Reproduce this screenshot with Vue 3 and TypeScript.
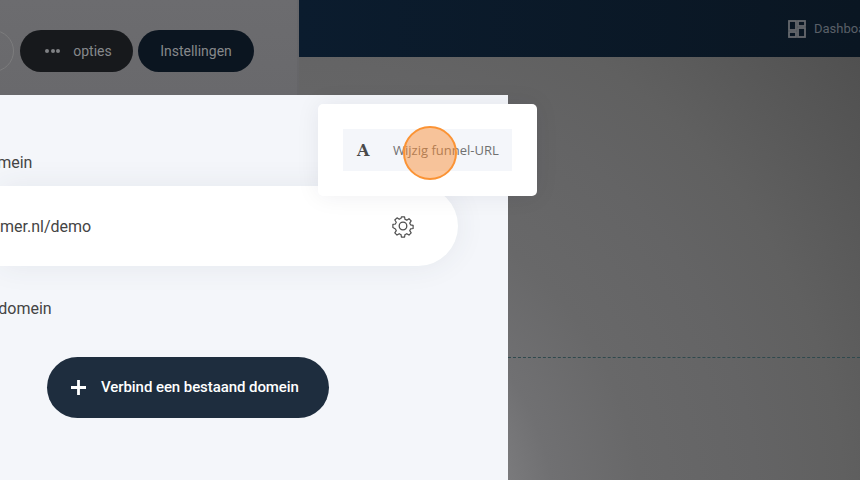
<template>
  <div class="page">
    <header class="topbar">
      <div class="toolbar">
        <span class="round-btn"></span>
        <button class="pill pill-options">
          <span class="dots"><i></i><i></i><i></i></span>
          opties
        </button>
        <button class="pill pill-settings">Instellingen</button>
      </div>
      <nav class="nav">
        <a class="nav-link">
          <svg class="nav-icon" viewBox="0 0 18 18" fill="none" stroke="currentColor" stroke-width="1.8">
            <rect x="1" y="1" width="7" height="9" />
            <rect x="10" y="1" width="7" height="5" />
            <rect x="1" y="12" width="7" height="5" />
            <rect x="10" y="8" width="7" height="9" />
          </svg>
          Dashboard
        </a>
      </nav>
    </header>

    <main class="stage">
      <section class="panel">
        <h3 class="label label-first">Hoofddomein</h3>
        <div class="domain-row">
          <span class="domain-url">klantenklimmer.nl/demo</span>
          <svg class="gear" viewBox="0 0 24 24" fill="none" stroke="currentColor" stroke-width="1.3" stroke-linejoin="round">
            <path d="M10.3 2h3.4l.5 2.8c.7.2 1.3.5 1.9.9l2.4-1.6 2.4 2.4-1.6 2.4c.4.6.7 1.2.9 1.9l2.8.5v3.4l-2.8.5c-.2.7-.5 1.3-.9 1.9l1.6 2.4-2.4 2.4-2.4-1.6c-.6.4-1.2.7-1.9.9l-.5 2.8h-3.4l-.5-2.8c-.7-.2-1.3-.5-1.9-.9l-2.4 1.6-2.4-2.4 1.6-2.4c-.4-.6-.7-1.2-.9-1.9L1 13.7v-3.4l2.8-.5c.2-.7.5-1.3.9-1.9L3.1 5.5l2.4-2.4 2.4 1.6c.6-.4 1.2-.7 1.9-.9z" transform="translate(12 12) scale(.92) translate(-12 -12)" />
            <circle cx="12" cy="12" r="3.8" />
          </svg>
        </div>
        <h3 class="label label-second">Subdomein</h3>
        <button class="connect-btn">
          <svg class="plus" viewBox="0 0 16 16" fill="none" stroke="currentColor" stroke-width="3">
            <path d="M8 0v16M0 8h16" />
          </svg>
          <span class="connect-text">Verbind een bestaand domein</span>
        </button>
      </section>
      <div class="guide"></div>

      <div class="popup">
        <div class="popup-item">
          <span class="popup-glyph">A</span>
          <span class="popup-text">Wijzig funnel-URL</span>
        </div>
      </div>
      <div class="click-dot"></div>
    </main>
  </div>
</template>

<script setup lang="ts">
</script>

<style>
html,
body {
  margin: 0;
  overflow: hidden;
}
</style>

<style scoped>
.page {
  width: 860px;
  height: 480px;
  overflow: hidden;
  display: flex;
  flex-direction: column;
  font-family: Roboto, "Liberation Sans", sans-serif;
}

.topbar {
  height: 57px;
  display: flex;
  flex-shrink: 0;
  position: relative;
  z-index: 1;
}

/* grey block runs down to the panel, past the navy bar */
.toolbar {
  width: 299px;
  height: 95px;
  background: linear-gradient(180deg, #6c6c6f, #69696c);
  box-shadow: inset -2px 0 0 rgba(0, 0, 0, 0.03);
  display: flex;
  align-items: flex-start;
  gap: 5px;
  box-sizing: border-box;
  padding-top: 30px;
}

.round-btn {
  width: 42px;
  height: 42px;
  margin-left: -28px;
  margin-right: 1px;
  border: 1px solid #7c7c7d;
  border-radius: 50%;
  flex-shrink: 0;
  box-sizing: border-box;
}

.pill {
  height: 42px;
  border: 0;
  border-radius: 21px;
  padding: 0;
  font: 400 14px Roboto, sans-serif;
  color: #86888b;
  display: flex;
  align-items: center;
  justify-content: center;
  flex-shrink: 0;
}

.pill-options {
  width: 113px;
  gap: 13px;
  padding-left: 4px;
  box-sizing: border-box;
  background: #17191c;
}

.pill-settings {
  width: 116px;
  background: #0b1520;
}

.dots {
  display: flex;
  gap: 1.5px;
}

.dots i {
  width: 4px;
  height: 4px;
  border-radius: 50%;
  background: #7f8184;
}

.nav {
  flex: 1;
  height: 57px;
  background: linear-gradient(90deg, #0b1c2e, #0a1622);
  display: flex;
  justify-content: flex-end;
  align-items: center;
  overflow: hidden;
}

.nav-link {
  width: 72px;
  display: flex;
  align-items: center;
  gap: 8px;
  font-size: 13px;
  color: #5a6068;
  white-space: nowrap;
}

.nav-icon {
  width: 18px;
  height: 18px;
  flex-shrink: 0;
  color: #66696e;
}

.stage {
  position: relative;
  flex: 1;
  display: flex;
  background: radial-gradient(727px 727px at 300px 463px, #7c7c7e 28%, #707072 35%, #686869 47%, #646465 63%, #606060 75%, #505050 100%);
}

.panel {
  width: 508px;
  margin-top: 38px;
  background: #f4f6fa;
  flex-shrink: 0;
  overflow: hidden;
  color: #444;
}

.label {
  margin: 0;
  font-size: 16px;
  font-weight: 400;
  line-height: 20px;
  white-space: nowrap;
}

.label-first {
  margin-top: 58px;
  margin-left: -65px;
}

.label-second {
  margin-top: 33px;
  margin-left: -29px;
}

.domain-row {
  width: 458px;
  height: 80px;
  margin-top: 13px;
  background: #fff;
  border-radius: 0 40px 40px 0;
  box-shadow: 0 0 30px rgba(50, 60, 90, 0.08);
  display: flex;
  align-items: center;
  justify-content: space-between;
  padding-right: 43px;
  box-sizing: border-box;
}

.domain-url {
  font-size: 16px;
  margin-left: -82px;
  white-space: nowrap;
}

.gear {
  width: 24px;
  height: 24px;
  color: #4e4e4e;
  flex-shrink: 0;
}

.connect-btn {
  width: 282px;
  height: 61px;
  margin: 38px 0 0 47px;
  border: 0;
  border-radius: 31px;
  background: #1e2d3e;
  color: #fff;
  font: 500 15px Roboto, sans-serif;
  display: flex;
  align-items: center;
  gap: 15px;
  padding: 0 0 0 24px;
  box-sizing: border-box;
}

.connect-text {
  letter-spacing: -0.07px;
  margin-top: -2px;
}

.plus {
  width: 15px;
  height: 15px;
}

.guide {
  flex: 1;
  height: 0;
  margin-top: 300px;
  border-top: 1px dashed #2f4a4e;
}

.popup {
  position: absolute;
  left: 318px;
  top: 47px;
  width: 219px;
  height: 92px;
  background: #fff;
  border-radius: 5px;
  box-shadow: 0 0 24px rgba(30, 30, 50, 0.07);
  box-sizing: border-box;
  padding: 25px;
}

.popup-item {
  height: 42px;
  background: #f4f6fa;
  display: flex;
  align-items: center;
  padding-left: 14px;
  box-sizing: border-box;
}

.popup-glyph {
  width: 36px;
  font: 700 16px "DejaVu Serif", "Liberation Serif", serif;
  color: #4a4a4a;
}

.popup-text {
  font: 400 13px "Open Sans", sans-serif;
  color: #707070;
  white-space: nowrap;
}

.click-dot {
  position: absolute;
  left: 403px;
  top: 69px;
  width: 54px;
  height: 54px;
  box-sizing: border-box;
  border-radius: 50%;
  border: 2px solid #fb9334;
  background: rgba(250, 140, 50, 0.48);
}
</style>
